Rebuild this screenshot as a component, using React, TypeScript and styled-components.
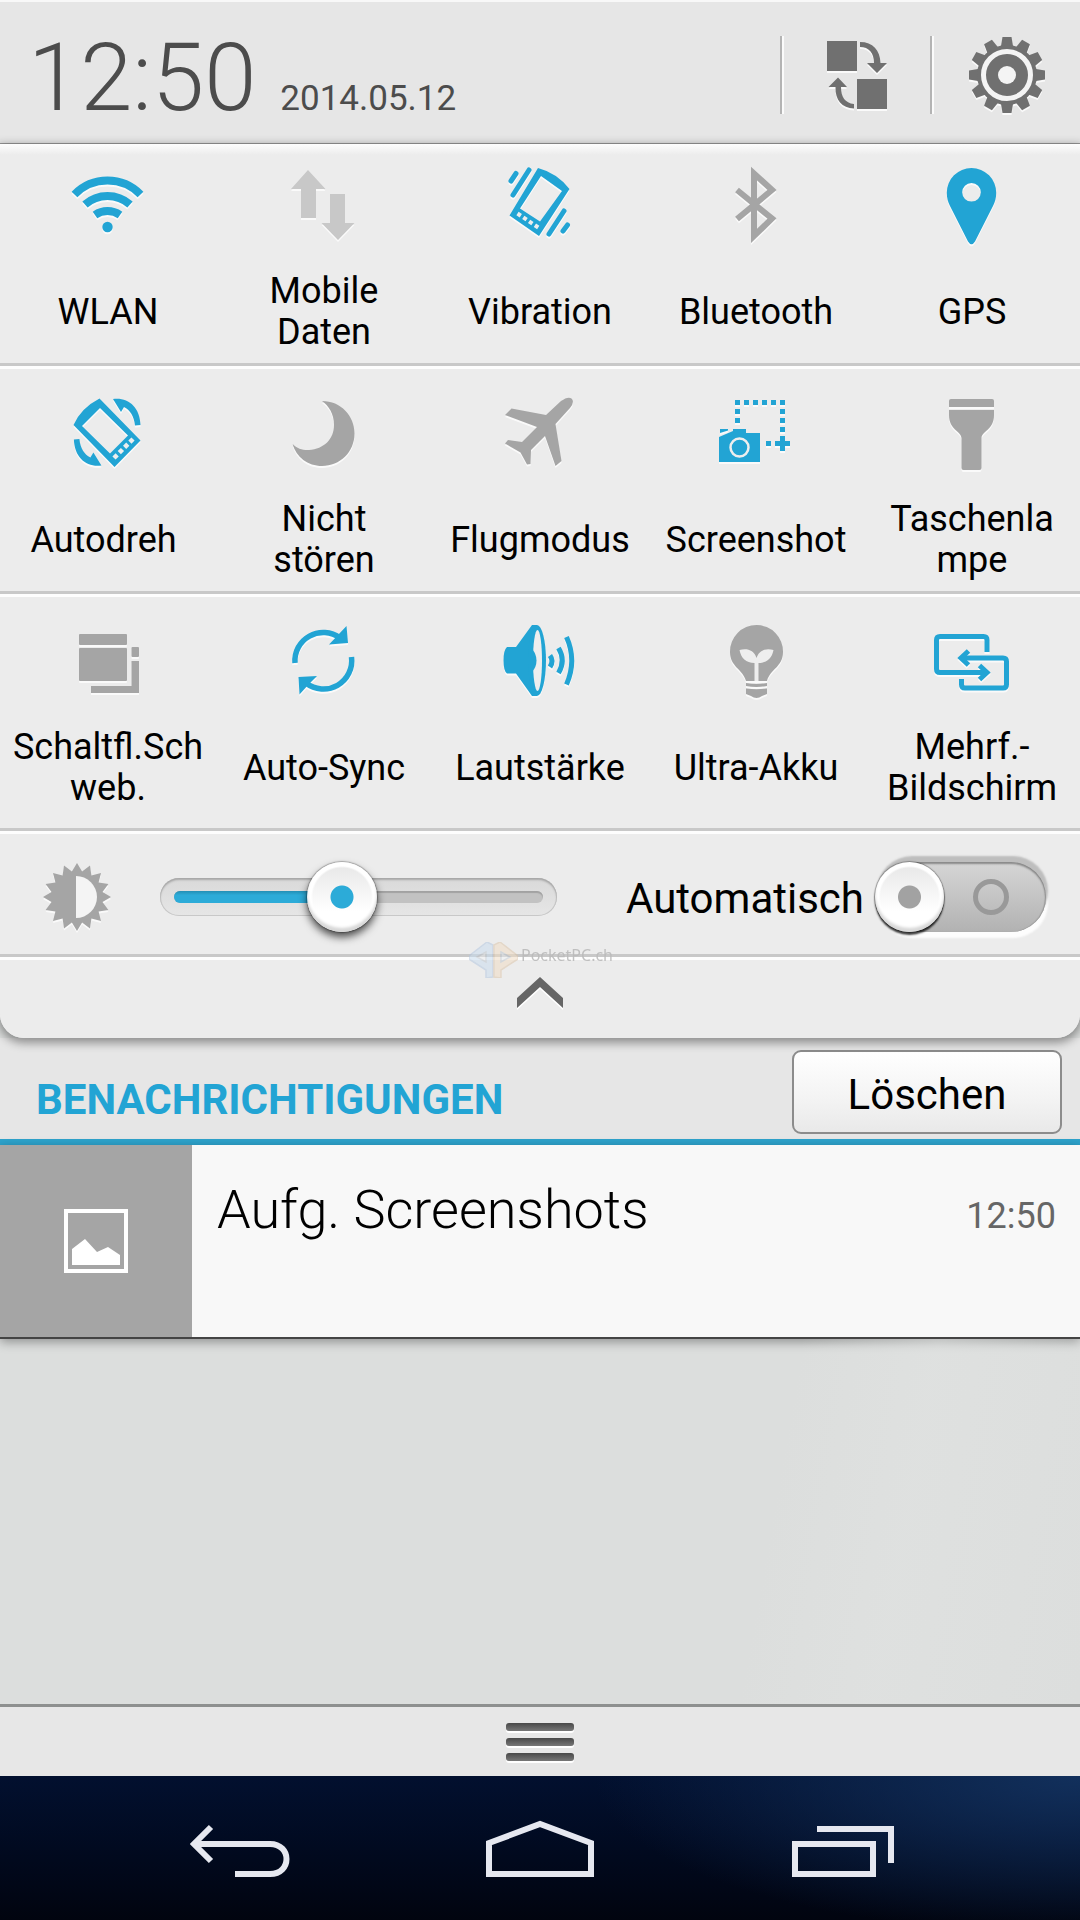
import React, { useState } from "react";
import styled, { createGlobalStyle } from "styled-components";

const blue = "#22a4d4";
const grey = "#a5a5a5";
const paleGrey = "#c8c8c8";

const GlobalStyle = createGlobalStyle`
  *, *::before, *::after { box-sizing: border-box; }
  body { margin: 0; background: #dcdedd; }
  button, input { font: inherit; color: inherit; margin: 0; padding: 0; }
  button { border: 0; background: none; cursor: pointer; }
`;

const Screen = styled.div`
  display: flex;
  flex-direction: column;
  min-height: 100vh;
  font-family: Roboto, "Noto Sans", sans-serif;
  color: #000;
  background: #dcdedd;
`;

const Header = styled.header`
  display: flex;
  align-items: center;
  height: 144px;
  padding: 4px 0 0 28px;
  background: #e6e6e6;
  border-top: 2px solid #f8f8f8;
  border-bottom: 1px solid #999;
`;

const Clock = styled.div`
  display: flex;
  flex: 1;
  align-items: baseline;
  gap: 24px;
  padding-top: 6px;
  color: #4c4c4c;
`;

const Time = styled.time`
  font-size: 94px;
  font-weight: 300;
  line-height: 112px;
`;

const DateText = styled.time`
  font-size: 35px;
`;

const Divider = styled.span`
  width: 4px;
  height: 78px;
  background: linear-gradient(90deg, #b4b4b4 50%, #fbfbfb 50%);
`;

const HeaderButton = styled.button`
  display: flex;
  justify-content: center;
  width: 146px;
`;

const Icon = styled.svg`
  display: block;
  width: 80px;
  height: 80px;
  flex: none;
  overflow: visible;
  filter: drop-shadow(0 2px 0 #fafafa);
`;

const Panel = styled.section`
  position: relative;
  z-index: 1;
  background: #ececec;
  border-radius: 0 0 24px 24px;
  box-shadow: 0 3px 10px 2px rgba(0, 0, 0, 0.38);
`;

const TileRow = styled.div<{ $top: number; $bottom: number }>`
  display: grid;
  grid-template-columns: repeat(5, 1fr);
  padding: ${(p) => p.$top}px 0 ${(p) => p.$bottom}px;
  border-bottom: 3px solid #c8c8c8;
  background: linear-gradient(#fdfdfd 3px, #ececec 3px);

  &:first-child {
    background: linear-gradient(#fdfdfd, #ececec 11px);
  }
`;

const Tile = styled.button<{ $tone: string }>`
  display: flex;
  flex-direction: column;
  align-items: center;
  gap: 26px;
  font-size: 36px;
  line-height: 41px;

  svg { color: ${(p) => p.$tone}; }
`;

const TileLabel = styled.span`
  display: flex;
  align-items: center;
  height: 82px;
  text-align: center;
  white-space: pre;
`;

const BrightnessRow = styled.div`
  display: flex;
  align-items: center;
  height: 126px;
  padding: 8px 34px 0 37px;
  border-bottom: 3px solid #c8c8c8;
  background: linear-gradient(#fdfdfd 3px, #ececec 3px);
`;

const Slider = styled.div`
  display: grid;
  flex: 1;
  align-items: center;
  margin: 0 69px 0 43px;

  > * { grid-area: 1 / 1; }
`;

const Track = styled.div`
  height: 38px;
  padding: 13px 14px;
  border-radius: 19px;
  background: linear-gradient(#d9d9d9, #e6e6e6);
  box-shadow: inset 0 2px 2px #a8a8a8, inset 0 0 0 1px #c8c8c8;
`;

const Groove = styled.div`
  height: 12px;
  border-radius: 6px;
  overflow: hidden;
  background: #c2c2c2;
  box-shadow: inset 0 2px 1px #a2a2a2;
`;

const Fill = styled.div`
  height: 100%;
  background: linear-gradient(#238fb5, #2cabd8 35%);
`;

const Range = styled.input`
  appearance: none;
  width: 100%;
  height: 70px;
  background: transparent;

  &::-webkit-slider-thumb {
    appearance: none;
    width: 70px;
    height: 70px;
    border-radius: 50%;
    background:
      radial-gradient(circle, #2cabd8 11px, transparent 12px),
      radial-gradient(circle, transparent 29px, #ffffff 31px),
      linear-gradient(#e6e6e6, #ffffff 70%);
    box-shadow: 0 0 1px 1px rgba(0, 0, 0, 0.25), 0 5px 8px rgba(0, 0, 0, 0.7), inset 0 -4px 3px #d8d8d8;
  }
`;

const SwitchLabel = styled.label`
  display: flex;
  align-items: center;
  gap: 11px;
  font-size: 42px;
  line-height: 50px;
`;

const SwitchText = styled.span`
  padding-top: 5px;
`;

const Switch = styled.input`
  appearance: none;
  display: flex;
  align-items: center;
  justify-content: space-between;
  width: 171px;
  height: 70px;
  padding-right: 37px;
  border-radius: 35px;
  background: linear-gradient(#d6d6d6, #b2b2b2);
  box-shadow: inset 0 2px 2px #888, inset -1px 0 1px #999, 2px -6px 2px #bebebe, 2px 6px 2px #fdfdfd;

  &::before {
    content: "";
    width: 69px;
    height: 70px;
    border-radius: 50%;
    background:
      radial-gradient(circle, #a2a2a2 11px, transparent 12px),
      radial-gradient(circle, transparent 29px, #ffffff 31px),
      linear-gradient(#e6e6e6, #ffffff 70%);
    box-shadow: 0 0 1px 1px rgba(0, 0, 0, 0.3), 0 3px 2px rgba(0, 0, 0, 0.75), inset 0 -4px 3px #d8d8d8;
  }

  &::after {
    content: "";
    width: 36px;
    height: 36px;
    border: 5px solid #999;
    border-radius: 50%;
  }

  &:checked { flex-direction: row-reverse; padding: 0 0 0 37px; }
`;

const Collapse = styled.button`
  display: flex;
  justify-content: center;
  width: 100%;
  height: 81px;
  padding-top: 20px;
  border-radius: 0 0 24px 24px;
  background: linear-gradient(#fdfdfd 3px, #ececec 3px);
`;

const Chevron = styled.svg`
  width: 46px;
  height: 31px;
  filter: drop-shadow(0 2px 0 #fff);
`;

const Watermark = styled.div`
  position: absolute;
  left: 50%;
  bottom: 60px;
  transform: translateX(-50%);
  display: flex;
  align-items: flex-start;
  gap: 3px;
  padding-left: 2px;
  font-family: "Noto Sans", sans-serif;
  font-size: 16px;
  line-height: 26px;
  color: #bbb;
  opacity: 0.9;
  pointer-events: none;
`;

const SectionBar = styled.div`
  display: flex;
  align-items: flex-end;
  justify-content: space-between;
  height: 107px;
  padding: 0 18px 5px 36px;
  background: #e6e6e6;
  border-bottom: 6px solid #2ea3cc;
`;

const SectionTitle = styled.h2`
  margin: 0;
  padding-bottom: 9px;
  color: ${blue};
  font-size: 42px;
  font-weight: 700;
  line-height: 50px;
`;

const ClearButton = styled.button`
  width: 270px;
  height: 84px;
  padding-top: 5px;
  border: 2px solid #8c8c8c;
  border-radius: 9px;
  background: linear-gradient(#ffffff, #f3f3f3 60%, #e9e9e9);
  font-size: 42px;
  line-height: 50px;
`;

const Notification = styled.article`
  display: flex;
  height: 194px;
  background: #f8f8f8;
  border-bottom: 2px solid #444;
  box-shadow: 0 3px 10px rgba(0, 0, 0, 0.35);
`;

const Thumb = styled.div`
  display: flex;
  align-items: center;
  justify-content: center;
  width: 192px;
  background: ${grey};
`;

const Message = styled.div`
  display: flex;
  flex: 1;
  align-items: baseline;
  justify-content: space-between;
  padding: 32px 24px 0 25px;
`;

const MessageTitle = styled.h3`
  margin: 0;
  font-size: 54px;
  font-weight: 300;
  line-height: 66px;
`;

const MessageTime = styled.time`
  color: #666;
  font-size: 36px;
`;

const Empty = styled.div`
  flex: 1;
  background: linear-gradient(100deg, transparent 70%, rgba(225, 227, 226, 0.5) 82%, transparent);
`;

const Handle = styled.button`
  display: flex;
  flex-direction: column;
  align-items: center;
  justify-content: center;
  gap: 7px;
  height: 72px;
  border-top: 3px solid #8e908f;
  background: #e7e7e7;
`;

const HandleBar = styled.span`
  width: 68px;
  height: 8px;
  border-radius: 3px;
  background: linear-gradient(#484848, #777);
  box-shadow: 0 2px 0 #fff;
`;

const Nav = styled.nav`
  display: grid;
  grid-template-columns: repeat(3, 1fr);
  height: 144px;
  padding: 6px 90px 0;
  background:
    radial-gradient(ellipse 45% 110% at 100% 0, #12305c, transparent),
    linear-gradient(#02102f, #010a20 50%, #01040f);
`;

const NavButton = styled.button`
  display: flex;
  align-items: center;
  justify-content: center;
`;

const NavIcon = styled.svg`
  width: 110px;
  height: 64px;
  fill: none;
  stroke: #e6e8f0;
  stroke-width: 6;
`;

const stroke = (width: number) => ({ fill: "none", stroke: "currentColor", strokeWidth: width });

const arrowPath = "M45 6C60 4 72 14 72.500 32L67 32.500C66 23 62 17 56 14L53 19Z";

const icons: Record<string, React.ReactNode> = {
  wifi: (
    <g>
      <path {...stroke(8)} d="M6.500 29.500A46 46 0 0 1 72.500 29.500" />
      <path {...stroke(8)} d="M17 39.500A34 34 0 0 1 62 39.500" />
      <path {...stroke(8)} d="M27 50A22 22 0 0 1 52 50" />
      <circle cx="39.500" cy="62" r="5.200" fill="currentColor" />
    </g>
  ),
  data: (
    <g fill="currentColor">
      <path d="M24 5L41.500 24H32V53H17V24H7Z" />
      <path d="M46 29H61V58H70.500L54 75L37.500 58H46Z" />
    </g>
  ),
  vibration: (
    <g>
      <path fill="currentColor" fillRule="evenodd" d="M38 3Q57 8 69.500 24L39 71L9.500 50.500ZM41 11L20 43.500L40 56.500L62 26Z" />
      <path stroke="#eee" strokeWidth="4" strokeDasharray="4 3" fill="none" d="M17.500 48.500L39 63" />
      <path {...stroke(5)} strokeLinecap="round" d="M16 8.500L11 16M29 5L13 30M64 46L49 69M67.500 60L63 66" />
    </g>
  ),
  bluetooth: <path {...stroke(6)} d="M21 25L56 53.500L38 71V8.500L56 25L21 54" />,
  gps: (
    <path
      fill="currentColor"
      fillRule="evenodd"
      d="M39.500 3A24.700 24.700 0 0 1 64.200 28C64.200 33 63 37 61 41L43 76.500Q39.500 82 36 76.500L18 41C16 37 14.800 33 14.800 28A24.700 24.700 0 0 1 39.500 3ZM39.500 18A9.300 9.300 0 1 0 39.500 36.600A9.300 9.300 0 1 0 39.500 18Z"
    />
  ),
  rotate: (
    <g fill="currentColor">
      <path fillRule="evenodd" d="M31.500 5.500L72.500 47.500L46.500 74L5.500 32Q13 15 31.500 5.500ZM32 15L14 33L42 60.500L60 42.500Z" />
      <path stroke="#eee" strokeWidth="4.500" strokeDasharray="4.500 3" d="M46 65L65 46" />
      <path d={arrowPath} />
      <path d={arrowPath} transform="rotate(180 39.200 39.300)" />
    </g>
  ),
  moon: (
    <path
      fill="currentColor"
      d="M38 8C57 8 70.500 23 70.500 40.500C70.500 59 56 73 38 73C24 73 12 64 8.700 51C13 56 20 57.500 25 57C40 56 50 46 50 32C50 21 45 13 38 8Z"
    />
  ),
  plane: (
    <path
      fill="currentColor"
      d="M61 8Q68 3 71.500 5.500Q75 9 70 15L55.500 31L61.500 68L55.500 73L45 43L31 57L30.500 71L27 71.500L20.500 59.500L5 50.500L8 47L22 49L37 34L5 22L11.500 15.500L46 22Z"
    />
  ),
  screenshot: (
    <g fill="currentColor">
      {[19, 28, 37, 46, 55, 64].map((x) => (
        <rect key={x} x={x} y="7" width="5" height="5" />
      ))}
      <path d="M19 16h5v5h-5zM19 25h5v5h-5zM64 16h5v5h-5zM64 25h5v5h-5zM64 34h5v5h-5zM50 48h5v5h-5zM59 48h5v-5h5v5h5v5h-5v5h-5v-5h-5z" />
      <path d="M4 36H12V37.500L4 40ZM3 44L17 38V36H30V40H44V69H3Z" />
      <circle cx="23.500" cy="54.500" r="9" fill="none" stroke="#eee" strokeWidth="2.500" />
    </g>
  ),
  torch: (
    <g fill="currentColor">
      <path d="M19 6H60Q62 6 62 8V14H17V8Q17 6 19 6Z" />
      <path d="M17 17H62V22C62 37 50 38 49.500 45V75Q49.500 77 47.500 77H31.500Q29.500 77 29.500 75V45C29 38 17 37 17 22Z" />
    </g>
  ),
  windows: (
    <g fill="currentColor">
      <rect x="11" y="13" width="48" height="11" rx="1" />
      <rect x="11" y="27" width="48" height="33" rx="1" />
      <rect x="63.500" y="26" width="7.500" height="10" rx="1" />
      <path d="M63.500 40H71V72H23V65H63.500Z" />
    </g>
  ),
  sync: (
    <g>
      <path {...stroke(5.5)} d="M11 42A28.300 28.300 0 0 1 56 17M67.500 36A28.300 28.300 0 0 1 22 62" />
      <path fill="currentColor" d="M62.500 5L64 22L45 23.500L54 14ZM15.500 73.500L14.500 56L33 55L24 64Z" />
    </g>
  ),
  speaker: (
    <g>
      <path fill="currentColor" d="M7 26H16L32 4H37V75H32L16 52.500H7Q3.500 50 3.500 39.500Q3.500 29 7 26Z" />
      <ellipse cx="37" cy="39.500" rx="9" ry="35.500" fill="currentColor" />
      <ellipse cx="37.500" cy="39.500" rx="4.500" ry="30.500" fill="#eee" />
      <path fill="currentColor" d="M32 28Q36.500 33 36.500 39.500Q36.500 46 32 51Z" />
      <path {...stroke(5)} d="M50 34.500Q54 40 50 46M58.500 27Q66 39.500 58.500 52M66.500 16Q77 39.500 66.500 63.500" />
    </g>
  ),
  bulb: (
    <g fill="currentColor">
      <path d="M40.500 4A26.500 26.500 0 0 1 67 31C67 46 54 48 51 60H30C27 48 14 46 14 31A26.500 26.500 0 0 1 40.500 4Z" />
      <path fill="#eee" d="M38.500 60V42C30 42 25 37 23.500 29C31 27 38 29 40.500 37C43 29 50 27 57.500 29C56 37 51 42 42.500 42V60Z" />
      <path d="M30 62Q40.500 64 51 62V65Q40.500 67 30 65ZM30 67.500Q40.500 69 51 67.500V73L46 75Q40.500 79 35 75L30 73Z" />
    </g>
  ),
  multi: (
    <g {...stroke(5)}>
      <path d="M55 31V19Q55 15.500 51.500 15.500H8Q4.500 15.500 4.500 19V48Q4.500 51.500 8 51.500H54" />
      <path d="M47.500 44.500L55 51.500L47.500 58.500M36.500 30L29 37L36.500 44" />
      <path d="M30 37H71Q74.500 37 74.500 40.500V63.500Q74.500 67 71 67H33Q29.500 67 29.500 63.500V58" />
    </g>
  ),
};

type TileData = { icon: string; label: string; tone: string };

const rows: { top: number; bottom: number; tiles: TileData[] }[] = [
  {
    top: 21,
    bottom: 10,
    tiles: [
      { icon: "wifi", label: "WLAN", tone: blue },
      { icon: "data", label: "Mobile\nDaten", tone: paleGrey },
      { icon: "vibration", label: "Vibration", tone: blue },
      { icon: "bluetooth", label: "Bluetooth", tone: grey },
      { icon: "gps", label: "GPS", tone: blue },
    ],
  },
  {
    top: 27,
    bottom: 10,
    tiles: [
      { icon: "rotate", label: "Autodreh ", tone: blue },
      { icon: "moon", label: "Nicht\nstören", tone: grey },
      { icon: "plane", label: "Flugmodus", tone: grey },
      { icon: "screenshot", label: "Screenshot", tone: blue },
      { icon: "torch", label: "Taschenla\nmpe", tone: grey },
    ],
  },
  {
    top: 27,
    bottom: 19,
    tiles: [
      { icon: "windows", label: "Schaltfl.Sch\nweb.", tone: grey },
      { icon: "sync", label: "Auto-Sync", tone: blue },
      { icon: "speaker", label: "Lautstärke", tone: blue },
      { icon: "bulb", label: "Ultra-Akku", tone: grey },
      { icon: "multi", label: "Mehrf.-\nBildschirm", tone: blue },
    ],
  },
];

const sunPoints = Array.from({ length: 32 }, (_, i) => {
  const r = i % 2 === 0 ? 34 : 26;
  const a = (i * Math.PI) / 16;
  return `${(40 + r * Math.sin(a)).toFixed(1)},${(40 - r * Math.cos(a)).toFixed(1)}`;
}).join(" ");

const SwapIcon = () => (
  <Icon viewBox="0 0 80 80" fill="#707070">
    <path d="M10 6H40V36H10ZM40 44H70V74H40Z" />
    <path d="M43 7C56 7 63 15 63.500 28H70L60 38L50 28H57C57 18 52 12 43 12Z" />
    <path d="M37 73.500C25 73 18 65 18.500 52H11.500L21 42.500L30 52H24C24 62 28 68 37 69Z" />
  </Icon>
);

const GearIcon = () => (
  <Icon viewBox="0 0 80 80" fill="#707070">
    {Array.from({ length: 12 }, (_, i) => (
      <path key={i} d="M35.500 2H44.500L46.500 14H33.500Z" transform={`rotate(${i * 30} 40 40)`} />
    ))}
    <circle cx="40" cy="40" r="30" />
    <circle cx="40" cy="40" r="23.500" fill="none" stroke="#f4f4f4" strokeWidth="5" />
    <circle cx="40" cy="40" r="9" fill="#f4f4f4" />
  </Icon>
);

export default function App() {
  const [level, setLevel] = useState(45);
  const [auto, setAuto] = useState(false);

  return (
    <Screen>
      <GlobalStyle />
      <Header>
        <Clock>
          <Time>12:50</Time>
          <DateText>2014.05.12</DateText>
        </Clock>
        <Divider />
        <HeaderButton aria-label="Wechseln">
          <SwapIcon />
        </HeaderButton>
        <Divider />
        <HeaderButton aria-label="Einstellungen">
          <GearIcon />
        </HeaderButton>
      </Header>

      <Panel>
        {rows.map((row, i) => (
          <TileRow key={i} $top={row.top} $bottom={row.bottom}>
            {row.tiles.map((tile) => (
              <Tile key={tile.icon} $tone={tile.tone}>
                <Icon viewBox="0 0 80 80">{icons[tile.icon]}</Icon>
                <TileLabel>{tile.label}</TileLabel>
              </Tile>
            ))}
          </TileRow>
        ))}
        <BrightnessRow>
          <Icon viewBox="0 0 80 80">
            <polygon points={sunPoints} fill={grey} />
            <path d="M39 19A21 21 0 0 1 39 61Z" fill="#f4f4f4" />
          </Icon>
          <Slider>
            <Track>
              <Groove>
                <Fill style={{ width: `${level}%` }} />
              </Groove>
            </Track>
            <Range
              type="range"
              aria-label="Helligkeit"
              value={level}
              onChange={(e) => setLevel(Number(e.target.value))}
            />
          </Slider>
          <SwitchLabel>
            <SwitchText>Automatisch</SwitchText>
            <Switch type="checkbox" checked={auto} onChange={(e) => setAuto(e.target.checked)} />
          </SwitchLabel>
        </BrightnessRow>
        <Collapse aria-label="Einklappen">
          <Chevron viewBox="0 0 46 31">
            <path d="M23 0L46 21V31L23 10L0 31V21Z" fill="#666" />
          </Chevron>
        </Collapse>
        <Watermark>
          <svg width="49" height="36" viewBox="0 0 49 36" strokeWidth="1.500" opacity="0.6">
            <path d="M0 14L18 0L24 3V35L17 36V28L0 17Z" fill="#c9dcee" stroke="#b2c6df" />
            <path d="M49 14L31 0L25 3V35L32 36V28L49 17Z" fill="#f0dcc4" stroke="#dcc5aa" />
            <path d="M17 10L8 15L17 20ZM32 10L41 15L32 20Z" fill="#e4e6e8" stroke="#bcc4cc" />
          </svg>
          PocketPC.ch
        </Watermark>
      </Panel>

      <SectionBar>
        <SectionTitle>BENACHRICHTIGUNGEN</SectionTitle>
        <ClearButton>Löschen</ClearButton>
      </SectionBar>
      <Notification>
        <Thumb>
          <svg width="64" height="64" viewBox="0 0 64 64">
            <rect x="2" y="2" width="60" height="60" fill="none" stroke="#fff" strokeWidth="4" />
            <path d="M8 56V40L21 30L33 43L44 38L56 46V56Z" fill="#fff" />
          </svg>
        </Thumb>
        <Message>
          <MessageTitle>Aufg. Screenshots</MessageTitle>
          <MessageTime>12:50</MessageTime>
        </Message>
      </Notification>
      <Empty />
      <Handle aria-label="Schließen">
        <HandleBar />
        <HandleBar />
        <HandleBar />
      </Handle>
      <Nav>
        <NavButton aria-label="Zurück">
          <NavIcon viewBox="0 0 110 64">
            <path d="M26 8L9 25L26 42M9 25H85C107 25 107 55 85 55H50" />
          </NavIcon>
        </NavButton>
        <NavButton aria-label="Startseite">
          <NavIcon viewBox="0 0 110 64">
            <path d="M4 55V24L55 5L106 24V55Z" />
          </NavIcon>
        </NavButton>
        <NavButton aria-label="Letzte Apps">
          <NavIcon viewBox="0 0 110 64">
            <path d="M10 25H88V55H10ZM32 10H106V44" />
          </NavIcon>
        </NavButton>
      </Nav>
    </Screen>
  );
}
